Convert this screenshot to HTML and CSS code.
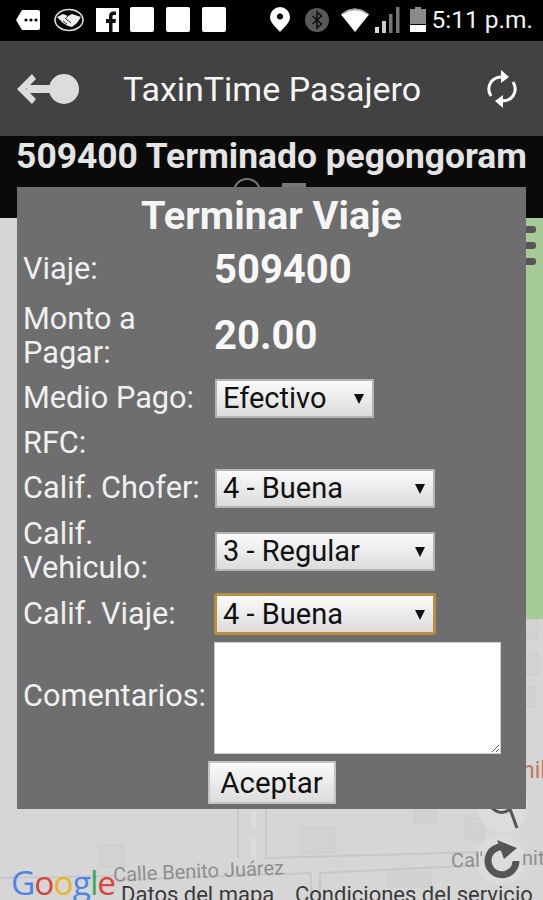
FILE: index.html
```html
<!DOCTYPE html>
<html>
<head>
<meta charset="utf-8">
<title>TaxinTime Pasajero</title>
<link rel="stylesheet" href="styles.css">
</head>

<body>
	<div class="status">
		<div class="status-left">
			<svg class="ic" width="24" height="20" viewBox="0 0 24 20"><path d="M6 0h16a2 2 0 0 1 2 2v16a2 2 0 0 1-2 2H6L0 10z" fill="#fff"/><circle cx="10" cy="10" r="1.6"/><circle cx="15" cy="10" r="1.6"/><circle cx="20" cy="10" r="1.6"/></svg>
			<svg class="ic" width="30" height="24" viewBox="0 0 30 24"><ellipse cx="15" cy="12" rx="14" ry="10.5" fill="none" stroke="#ddd" stroke-width="1.6"/><path d="M3 9l6-3 5 2 4-2 9 3-4 6-5 4-4-1-5-3z" fill="#eee"/><path d="M9 13l4 3M12 11l5 4M14 8l-3 3" stroke="#333" stroke-width="1"/></svg>
			<svg class="ic" width="23" height="24" viewBox="0 0 23 24"><rect width="23" height="24" fill="#fff"/><path d="M13 24v-9h-3v-4h3V8c0-3 2-4.500 4-4.500h3v3.500h-2c-1 0-1.500.5-1.500 1.500V11H20l-.5 4h-3v9z" fill="#111"/></svg>
			<span class="blank"></span>
			<span class="blank"></span>
			<span class="blank"></span>
		</div>
		<div class="status-right">
			<svg width="20" height="25" viewBox="0 0 20 25"><path d="M10 0a10 10 0 0 1 10 10c0 6-6 10-10 15C6 20 0 16 0 10A10 10 0 0 1 10 0z" fill="#fff"/><circle cx="10" cy="9.500" r="3" fill="#000"/></svg>
			<svg class="bt" width="24" height="24" viewBox="0 0 24 24"><circle cx="12" cy="12" r="12" fill="#585858"/><path d="M7.500 8l9 8-4.500 4V4l4.500 4-9 8" fill="none" stroke="#111" stroke-width="1.600"/></svg>
			<svg class="wifi" width="28" height="24" viewBox="0 0 28 24"><path d="M0 6.500C8-1.500 20-1.500 28 6.500L14 24z" fill="#fff"/><path d="M1.500 6C9 0 19 0 26.500 6" fill="none" stroke="#999" stroke-width="1.500"/></svg>
			<svg class="sig" width="25" height="26" viewBox="0 0 25 26"><rect x="0" y="20" width="4" height="6" fill="#ddd"/><rect x="7" y="14" width="4" height="12" fill="#ccc"/><rect x="14" y="7" width="3.500" height="19" fill="#777"/><rect x="21" y="0" width="3.500" height="26" fill="#777"/></svg>
			<svg class="bat" width="16" height="25" viewBox="0 0 16 25"><rect x="5" y="0" width="6" height="3" fill="#8a8a8a"/><rect x="0" y="2" width="16" height="15" fill="#8a8a8a"/><rect x="0" y="18" width="16" height="7" fill="#fff"/></svg>
			<span class="clock">5:11 p.m.</span>
		</div>
	</div>

	<div class="appbar">
		<svg class="back" width="62" height="32" viewBox="0 0 62 32"><circle cx="47" cy="16" r="15" fill="#dcdcdc"/><rect x="10" y="12" width="30" height="8" fill="#dcdcdc"/><path d="M15 1L0 16l15 15 4-5-10-10 10-10z" fill="#dcdcdc"/></svg>
		<span class="apptitle">TaxinTime Pasajero</span>
		<svg class="refresh" width="32" height="38" viewBox="0 0 32 38"><path d="M5 26a13 13 0 0 1 0-14c3-4 7-5 11-5" fill="none" stroke="#fff" stroke-width="3"/><path d="M15 0l8 7-8 6z" fill="#fff"/><path d="M27 12a13 13 0 0 1 0 14c-3 4-7 5-11 5" fill="none" stroke="#fff" stroke-width="3"/><path d="M17 38l-8-7 8-6z" fill="#fff"/></svg>
	</div>

	<div class="tripbar">
		<h2>509400 Terminado pegongoram</h2>
		<div class="tripbar-icons">
			<span class="round"></span>
			<span class="square"></span>
		</div>
	</div>

	<div class="map">
		<svg class="roads" width="543" height="682" viewBox="0 218 543 682">
			<rect x="526" y="218" width="17" height="401" fill="#a5cb96"/>
			<g fill="#d2d2d2" stroke="#cbcbcb">
				<rect x="526" y="620" width="12" height="20"/>
				<rect x="526" y="652" width="12" height="23"/>
				<rect x="526" y="687" width="9" height="20"/>
				<rect x="301" y="827" width="34" height="26"/>
				<rect x="99" y="845" width="25" height="22"/>
				<rect x="414" y="809" width="22" height="14"/>
				<rect x="465" y="818" width="19" height="22"/>
				<rect x="388" y="872" width="43" height="15"/>
			</g>
			<g fill="none" stroke="#c8c8c8" stroke-width="2">
				<path d="M238 809v49M266 809v50"/>
				<path d="M0 878l114-2"/>
				<path d="M266 858l218-6M114 880l197-7M320 873l164-8M311 873v27M320 873v27"/>
			</g>
			<g fill="#dcdcdc">
				<rect x="251" y="812" width="5" height="16"/>
				<rect x="251" y="838" width="5" height="22"/>
				<circle cx="503" cy="808" r="25"/>
				<circle cx="501" cy="860" r="25"/>
			</g>
			<path d="M490 803a12 12 0 0 0 20 6l7 19" fill="none" stroke="#555" stroke-width="3"/>
			<path d="M505 847a14 14 0 1 0 11 14" fill="none" stroke="#555" stroke-width="7"/>
			<path d="M497 840l20 8-13 11z" fill="#555"/>
		</svg>
		<div class="menu-dots"><i></i><i></i><i></i></div>
		<span class="place place-orange">hil</span>
		<span class="place place-call">Cal'</span>
		<span class="place place-nit">nit</span>
		<span class="place place-street">Calle Benito Juárez</span>
		<span class="google"><b class="g-b">G</b><b class="g-r">o</b><b class="g-y">o</b><b class="g-b">g</b><b class="g-g">l</b><b class="g-r">e</b></span>
		<span class="legal legal-data">Datos del mapa</span>
		<span class="legal legal-terms">Condiciones del servicio</span>
	</div>

	<div class="dialog">
		<h1>Terminar Viaje</h1>
		<div class="form">
			<label>Viaje:</label>
			<strong>509400</strong>
			<label>Monto a Pagar:</label>
			<strong>20.00</strong>
			<label>Medio Pago:</label>
			<div class="pick pick-short"><select><option>Efectivo</option></select></div>
			<label>RFC:</label>
			<div></div>
			<label>Calif. Chofer:</label>
			<div class="pick"><select><option>4 - Buena</option></select></div>
			<label>Calif. Vehiculo:</label>
			<div class="pick"><select><option>3 - Regular</option></select></div>
			<label>Calif. Viaje:</label>
			<div class="pick pick-focus"><select><option>4 - Buena</option></select></div>
			<label>Comentarios:</label>
			<textarea></textarea>
		</div>
		<div class="actions"><button>Aceptar</button></div>
	</div>
</body>
</html>
```

FILE: styles.css
```css
html, body {
	margin: 0;
	padding: 0;
}
body {
	position: relative;
	width: 543px;
	height: 900px;
	overflow: hidden;
	display: flex;
	flex-direction: column;
	font-family: Roboto, "Liberation Sans", sans-serif;
	background: #d6d6d6;
}

/* barra de estado */
.status {
	height: 41px;
	flex: none;
	background: #000;
	display: flex;
	justify-content: space-between;
	align-items: center;
	padding: 0 10px 2px 16px;
	box-sizing: border-box;
}
.status svg {
	display: block;
}
.status-left {
	display: flex;
	align-items: center;
	gap: 11px;
}
.status-left .ic:nth-child(2) {
	margin-left: 3px;
}
.status-left .ic:nth-child(3) {
	margin-left: 1px;
}
.blank {
	width: 24px;
	height: 25px;
	background: #fff;
	border-radius: 2px;
}
.blank + .blank {
	margin-left: 1px;
}
.status-right {
	display: flex;
	align-items: center;
}
.status-right .bt {
	margin-left: 15px;
}
.status-right .wifi {
	margin-left: 12px;
}
.status-right .sig {
	margin-left: 6px;
}
.status-right .bat {
	margin-left: 10px;
}
.clock {
	margin-left: 6px;
	color: #f2f2f2;
	font-size: 24.5px;
	white-space: nowrap;
}

/* barra de la app */
.appbar {
	height: 95px;
	flex: none;
	background: #424242;
	display: flex;
	align-items: center;
	padding: 0 25px 0 17px;
	box-sizing: border-box;
}
.apptitle {
	color: #f5f5f5;
	font-size: 34px;
	margin-left: 44px;
	flex: 1;
	white-space: nowrap;
}

.tripbar {
	height: 82px;
	flex: none;
	background: #0a0a0a;
	position: relative;
	text-align: center;
}
.tripbar h2 {
	margin: 0;
	color: #e4e4e4;
	font-size: 35.400px;
	line-height: 40px;
	white-space: nowrap;
}
.tripbar-icons {
	display: flex;
	gap: 21px;
	padding-left: 233px;
	margin-top: 2px;
}
.round {
	width: 28px;
	height: 28px;
	border-radius: 50%;
	border: 2px solid #777;
	box-sizing: border-box;
}
.square {
	width: 24px;
	height: 20px;
	background: #777;
	margin-top: 5px;
}

/* mapa de fondo */
.map {
	flex: 1;
	position: relative;
}
.roads {
	position: absolute;
	left: 0;
	top: 0;
}
.menu-dots {
	position: absolute;
	left: 524px;
	top: 8px;
	display: flex;
	flex-direction: column;
	gap: 9px;
}
.menu-dots i {
	display: block;
	width: 12px;
	height: 7px;
	border-radius: 3px;
	background: #555;
}
.place {
	position: absolute;
	white-space: nowrap;
	font-size: 20px;
	color: #8e8e8e;
}
.place-orange {
	left: 522px;
	top: 539px;
	color: #c4775a;
	font-size: 23px;
}
.place-call {
	left: 451px;
	top: 630px;
	transform: rotate(-2deg);
}
.place-nit {
	left: 522px;
	top: 628px;
}
.place-street {
	left: 113px;
	top: 641px;
	transform: rotate(-2.500deg);
}
.google {
	position: absolute;
	left: 11px;
	top: 642px;
	font-family: "Open Sans", sans-serif;
	font-size: 33.500px;
	letter-spacing: -1px;
	line-height: 44px;
}
.google b {
	font-weight: 400;
}
.g-b { color: #4a85e8; }
.g-r { color: #d9453a; }
.g-y { color: #e8b61d; }
.g-g { color: #3ea65a; }
.legal {
	position: absolute;
	top: 664px;
	color: #3a3a3a;
	font-size: 22px;
	white-space: nowrap;
}
.legal-data {
	left: 121px;
}
.legal-terms {
	left: 295px;
}

/* dialogo */
.dialog {
	position: absolute;
	left: 17px;
	top: 187px;
	width: 509px;
	height: 622px;
	box-sizing: border-box;
	background: #6e6e6e;
	color: #f0f0f0;
}
.dialog h1 {
	margin: 0;
	height: 56px;
	line-height: 58px;
	text-align: center;
	font-size: 39.700px;
	color: #f5f5f5;
}
.form {
	display: grid;
	grid-template-columns: 192px 1fr;
	grid-template-rows: 52px 81px 44px 46px 44px 82px 44px 120px;
	align-items: center;
	padding-left: 6px;
	font-size: 30.700px;
}
.form label {
	line-height: 34px;
}
.form strong {
	font-size: 40px;
	color: #f8f8f8;
	margin-left: -1px;
}
.pick {
	position: relative;
	width: 220px;
	height: 39px;
}
.pick-short {
	width: 159px;
}
.pick::after {
	content: "";
	position: absolute;
	right: 10px;
	top: 15px;
	border-left: 5px solid transparent;
	border-right: 5px solid transparent;
	border-top: 10px solid #111;
}
.pick select {
	appearance: none;
	-webkit-appearance: none;
	width: 100%;
	height: 100%;
	padding: 0 0 0 6px;
	border: 2px solid #b4b4b4;
	border-radius: 1px;
	background: linear-gradient(#fafafa, #dcdcdc);
	color: #111;
	font: 29px Roboto, sans-serif;
	display: block;
}
.pick-focus {
	height: 42px;
	margin-left: -1px;
	width: 222px;
}
.pick-focus select {
	border: 3px solid #b98f3e;
	border-radius: 3px;
}
.pick-focus::after {
	right: 11px;
	top: 17px;
}
textarea {
	width: 287px;
	height: 112px;
	box-sizing: border-box;
	border: 1px solid #ccc;
	background: #fff;
	display: block;
	margin: 4px 0 0 -1px;
}
.actions {
	text-align: center;
	margin-top: 5px;
}
button {
	height: 43px;
	width: 128px;
	padding: 0;
	border: 2px solid #c4c4c4;
	border-radius: 1px;
	background: linear-gradient(#fafafa, #dcdcdc);
	color: #111;
	font: 29.500px Roboto, sans-serif;
}
```
